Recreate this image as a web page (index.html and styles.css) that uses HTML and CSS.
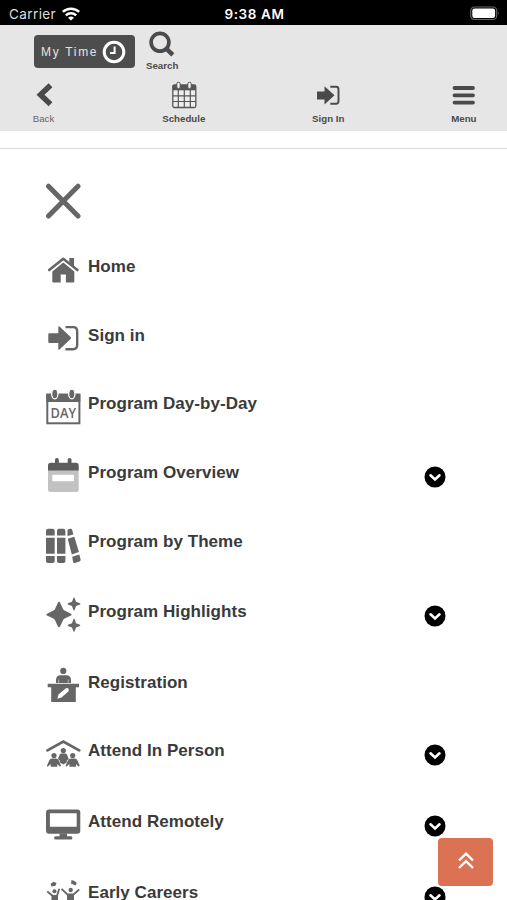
FILE: index.html
```html
<!DOCTYPE html>
<html lang="en">
<head>
    <meta charset="UTF-8">
    <meta name="viewport" content="width=device-width, initial-scale=1.0">
    <title>Menu</title>
    <link rel="stylesheet" href="styles.css">
</head>
<body>
    <div class="statusbar">
        <div class="carrier">
            <span>Carrier</span>
            <svg width="18" height="14" viewBox="0 0 18 14" fill="none" stroke="#fff" stroke-width="2.5">
                <path d="M.8 4.900C5.200.6 12.800.6 17.200 4.900"/>
                <path d="M3.800 8.300C6.800 5.500 11.200 5.500 14.200 8.300"/>
                <path d="M9 13.500L6 10.700Q9 8.500 12 10.700Z" fill="#fff" stroke="none"/>
            </svg>
        </div>
        <div class="time">9:38 AM</div>
        <svg class="battery" width="30" height="15" viewBox="0 0 30 15">
            <rect x="0.700" y="1" width="26" height="12.500" rx="3.800" fill="none" stroke="#666" stroke-width="1.200"/>
            <rect x="2.300" y="2.600" width="22.800" height="9.300" rx="2.200" fill="#fff"/>
            <path d="M28 5.200Q29.800 7.200 28 9.300Z" fill="#666"/>
        </svg>
    </div>

    <header>
        <div class="toprow">
            <button class="mytime">
                <span>My Time</span>
                <svg width="24" height="24" viewBox="0 0 24 24" fill="none" stroke="#fff">
                    <circle cx="12" cy="12" r="9.800" stroke-width="3"/>
                    <path d="M12.600 6.500V13H8" stroke-width="2"/>
                </svg>
            </button>
            <a class="nav search">
                <svg width="26" height="26" viewBox="0 0 26 26" fill="none" stroke="#4a4a4a">
                    <circle cx="11" cy="11.300" r="8.900" stroke-width="3.700"/>
                    <path d="M17 17.300L23.800 23.800" stroke-width="4.500"/>
                </svg>
                <span>Search</span>
            </a>
        </div>
        <nav>
            <a class="nav back">
                <svg width="24" height="28" viewBox="0 0 24 28" fill="none" stroke="#4a4a4a" stroke-width="5.500">
                    <path d="M18.500 4.300L8.500 13.800L18.500 23.300"/>
                </svg>
                <span>Back</span>
            </a>
            <a class="nav">
                <svg width="26" height="28" viewBox="0 0 26 28">
                    <rect x="1.800" y="4" width="23" height="22.500" rx="1.500" fill="#eee" stroke="#555" stroke-width="1.300"/>
                    <path d="M1.800 4H24.800V9.300H1.800Z" fill="#555"/>
                    <path d="M2 14.800H25M2 20.500H25M7.300 9V26M13.300 9V26M19.300 9V26" stroke="#555" stroke-width="1.200"/>
                    <rect x="5.800" y="1.200" width="3.400" height="6.500" rx="1.700" fill="#eee" stroke="#555"/>
                    <rect x="16.800" y="1.200" width="3.400" height="6.500" rx="1.700" fill="#eee" stroke="#555"/>
                </svg>
                <span>Schedule</span>
            </a>
            <a class="nav">
                <svg width="24" height="28" viewBox="0 0 24 28">
                    <path d="M1 10.500H8.500V5.300L18.500 14.300L8.500 23.500V18.500H1Z" fill="#4a4a4a"/>
                    <path d="M14.300 5.700H20Q22.500 5.700 22.500 8.200V20.300Q22.500 22.800 20 22.800H14.300" fill="none" stroke="#4a4a4a" stroke-width="1.900"/>
                </svg>
                <span>Sign In</span>
            </a>
            <a class="nav">
                <svg width="24" height="28" viewBox="0 0 24 28" stroke="#4a4a4a" stroke-width="3.800" stroke-linecap="round">
                    <path d="M2.500 7H21M2.500 14.300H21M2.500 21.600H21"/>
                </svg>
                <span>Menu</span>
            </a>
        </nav>
    </header>
    <div class="divider"></div>

    <main>
        <svg class="close" width="36" height="36" viewBox="0 0 36 36" stroke="#666" stroke-width="5" stroke-linecap="round">
            <path d="M3.500 3.200L33 33M33 3.200L3.500 33"/>
        </svg>

        <ul class="menu">
            <li>
                <svg class="icon" viewBox="0 0 36 36">
                    <path d="M24.300 6H29V15L24.300 11Z"/>
                    <path d="M4.200 18L18.300 6.800L32.400 18" fill="none" stroke="#666" stroke-width="2.600" stroke-linecap="round" stroke-linejoin="round"/>
                    <path d="M18.300 10.500L29.300 19.500V29.500Q29.300 30.500 28.300 30.500H20.900V22.500H15.700V30.500H8.300Q7.300 30.500 7.300 29.500V19.500Z"/>
                </svg>
                <span>Home</span>
            </li>
            <li>
                <svg class="icon" viewBox="0 0 36 36">
                    <path d="M4.300 13.200H13.300V7Q13.300 5.600 14.500 6.500L25.600 17Q26.500 18 25.600 19L14.500 29.500Q13.300 30.400 13.300 29V22.900H4.300Q3.300 22.900 3.300 21.900V14.200Q3.300 13.200 4.300 13.200Z"/>
                    <path d="M20.500 7.100H28Q32.200 7.100 32.200 11.300V25Q32.200 29.200 28 29.200H20.500" fill="none" stroke="#666" stroke-width="2.400"/>
                </svg>
                <span>Sign in</span>
            </li>
            <li>
                <svg class="icon" viewBox="0 0 36 36">
                    <rect x="2.300" y="5.700" width="32.100" height="28.600" fill="#fff" stroke="#666" stroke-width="2"/>
                    <path d="M1.300 4.800H35.300V13H1.300Z"/>
                    <ellipse cx="9.800" cy="5" rx="3.100" ry="4.900" stroke="#fff" stroke-width="1.300"/>
                    <ellipse cx="26.800" cy="5" rx="3.100" ry="4.900" stroke="#fff" stroke-width="1.300"/>
                    <text class="day" x="5.600" y="29" textLength="25.500" lengthAdjust="spacingAndGlyphs">DAY</text>
                </svg>
                <span>Program Day-by-Day</span>
            </li>
            <li class="mid">
                <svg class="icon" viewBox="0 0 36 36">
                    <rect x="3" y="8" width="30.700" height="27" rx="2.500" fill="#c2c2c2"/>
                    <path d="M3 13.500V8.500Q3 5.700 5.800 5.700H10V2.500Q10 1 11.900 1T13.800 2.500V5.700H22.700V2.500Q22.700 1 24.600 1T26.500 2.500V5.700H30.900Q33.700 5.700 33.700 8.500V13.500Z" fill="#5c5c5c"/>
                    <rect x="7.300" y="17.700" width="21.700" height="6.500" rx="0.600" fill="#fff"/>
                </svg>
                <span>Program Overview</span>
                <svg class="arrow" viewBox="0 0 22 22"><circle cx="11" cy="11" r="10.500"/><path d="M6.500 9.300L11 13.400L15.500 9.300"/></svg>
            </li>
            <li class="mid">
                <svg class="icon" viewBox="0 0 36 36">
                    <path d="M1 8.500V4Q1 1.800 3.200 1.800H7.500Q9.700 1.800 9.700 4V8.500ZM1 10.800H9.700V26.800H1ZM1 28.900H9.700V34.200Q9.700 36 7.700 36H3Q1 36 1 34.200Z"/>
                    <path d="M12 8.500V4Q12 1.800 14.200 1.800H18.200Q20.400 1.800 20.400 4V8.500ZM12 10.800H20.400V26.800H12ZM12 28.900H20.400V34.200Q20.400 36 18.400 36H14Q12 36 12 34.200Z"/>
                    <path d="M22.500 9V3.800Q22.500 2.300 24 2L25.600 1.800Q26.800 1.700 27.200 3L28.400 7.400ZM22.700 11.800L29.300 9.800L33.900 25L26.800 27.600ZM27.200 29.800L34.300 27.400L35.600 32.500Q36 34 34.500 34.500L29.800 35.900Q28.500 36.300 28.100 34.900Z"/>
                </svg>
                <span>Program by Theme</span>
            </li>
            <li class="tall">
                <svg class="icon" viewBox="0 0 36 36">
                    <path d="M14 4.800Q14.800 4.800 15.200 6L18 12Q18.500 13.100 19.600 13.600L25.500 16.400Q26.600 16.900 26.600 17.600T25.500 18.800L19.600 21.600Q18.500 22.100 18 23.200L15.200 29.200Q14.800 30.300 14 30.300T12.800 29.200L10 23.200Q9.500 22.100 8.400 21.600L2.500 18.800Q1.400 18.300 1.400 17.600T2.500 16.400L8.400 13.600Q9.500 13.100 10 12L12.800 6Q13.200 4.800 14 4.800Z"/>
                    <path id="spark" d="M29 .4Q29.500.4 29.800 1.400L31 4.800L34.400 6Q35.400 6.400 35.400 6.900T34.400 7.800L31 9L29.800 12.400Q29.500 13.400 29 13.400T28.200 12.400L27 9L23.600 7.800Q22.600 7.400 22.600 6.900T23.600 6L27 4.800L28.200 1.400Q28.500.4 29 .4Z"/>
                    <use href="#spark" y="21.400"/>
                </svg>
                <span>Program Highlights</span>
                <svg class="arrow" viewBox="0 0 22 22"><circle cx="11" cy="11" r="10.500"/><path d="M6.500 9.300L11 13.400L15.500 9.300"/></svg>
            </li>
            <li>
                <svg class="icon" viewBox="0 0 36 36">
                    <circle cx="18.300" cy="3.900" r="3.100"/>
                    <path d="M11 16V13Q11 8.200 15.500 8.200H21.200Q26 8.200 26 13V16H23.400V12.500H22.900V16H14.100V12.500H13.600V16Z"/>
                    <path d="M2.700 16.800H34V20.300H30.800V35H6.200V20.300H2.700Z"/>
                    <path d="M12.300 31.800L13.500 27.600L20.500 21.400Q24.200 20 23.600 24.300L16.500 30.400Z" fill="#fff"/>
                </svg>
                <span>Registration</span>
            </li>
            <li class="tall">
                <svg class="icon" viewBox="0 0 36 36">
                    <path d="M2.500 14.400L18.300 5.500L34.200 14.400" fill="none" stroke="#666" stroke-width="2.800" stroke-linecap="round"/>
                    <circle cx="18.300" cy="14.600" r="2.600"/>
                    <path d="M12.900 23L14.700 18.600Q15.200 17.600 16.400 17.600H20.200Q21.400 17.600 21.900 18.600L23.700 23L21.800 24.600V26.500L18.300 28.500L14.800 26.500V24.600Z"/>
                    <circle cx="9" cy="19.500" r="2.600"/>
                    <circle cx="27.700" cy="19.500" r="2.600"/>
                    <path id="guest" d="M2.600 30.800L1.900 29.800L4.200 24.500Q5 22.500 7 22.500H11Q13 22.500 13.800 24.500L16 29.600L15 30.800L12.300 28V30.800H5.700V28Z"/>
                    <use href="#guest" x="18.700"/>
                </svg>
                <span>Attend In Person</span>
                <svg class="arrow" viewBox="0 0 22 22"><circle cx="11" cy="11" r="10.500"/><path d="M6.500 9.300L11 13.400L15.500 9.300"/></svg>
            </li>
            <li class="tall">
                <svg class="icon" viewBox="0 0 36 36">
                    <rect x="1" y="2.500" width="34.300" height="24.300" rx="3"/>
                    <rect x="4.900" y="6.200" width="26.800" height="13.500" rx="0.500" fill="#fff"/>
                    <path d="M14.600 26.500H22V29.300H26Q27.400 29.300 27.400 31T26 32.600H10.500Q9.100 32.600 9.100 31T10.500 29.300H14.600Z"/>
                </svg>
                <span>Attend Remotely</span>
                <svg class="arrow" viewBox="0 0 22 22"><circle cx="11" cy="11" r="10.500"/><path d="M6.500 9.300L11 13.400L15.500 9.300"/></svg>
            </li>
            <li class="tall">
                <svg class="icon" viewBox="0 0 36 36">
                    <path d="M5.500 7L8.500 4.800L11.500 6L10.500 8.800L6.500 9.500ZM26.500 3L29.500 4L31.800 6L30.500 8.500L26 6.500Z"/>
                    <circle cx="9.500" cy="14.200" r="2"/>
                    <circle cx="25.700" cy="13" r="2.200"/>
                    <path d="M2.300 14.500L7.500 18.800H12L14.300 11.800M16.500 11.800L22.500 17.500H28.500L34.200 12.500" fill="none" stroke="#666" stroke-width="1.800"/>
                    <path d="M6.500 18H13V36H6.500ZM22 17H29V36H22Z"/>
                </svg>
                <span>Early Careers</span>
                <svg class="arrow" viewBox="0 0 22 22"><circle cx="11" cy="11" r="10.500"/><path d="M6.500 9.300L11 13.400L15.500 9.300"/></svg>
            </li>
        </ul>
    </main>

    <button class="totop">
        <svg width="20" height="20" viewBox="0 0 20 20" fill="none" stroke="#fff" stroke-width="2.400">
            <path d="M3 9.500L10 2.700L17 9.500M3 17L10 10.200L17 17"/>
        </svg>
    </button>
</body>
</html>
```
FILE: styles.css
```css
*{
    box-sizing: border-box;
}
body{
    margin: 0;
    height: 900px;
    overflow: hidden;
    background-color: #fff;
    font-family: "Liberation Sans", Arial, sans-serif;
    color: #3a3a3a;
}
svg{
    display: block;
    flex-shrink: 0;
}
button{
    border: none;
    padding: 0;
    cursor: pointer;
}

/* status bar */
.statusbar{
    display: grid;
    grid-template-columns: 1fr auto 1fr;
    align-items: center;
    height: 25px;
    padding: 2px 7px 0 9px;
    background-color: #000;
    color: #fff;
    font-family: Inter, sans-serif;
    font-size: 13.5px;
}
.carrier{
    display: flex;
    align-items: center;
    gap: 6px;
    color: #ddd;
    letter-spacing: 0.4px;
}
.time{
    font-weight: 600;
    letter-spacing: 0.6px;
}
.battery{
    justify-self: end;
}

/* header */
header{
    height: 106px;
    background-color: #e6e6e6;
}
.toprow{
    display: flex;
    gap: 11px;
    height: 54px;
    padding: 6px 0 0 34px;
}
.mytime{
    display: flex;
    align-items: center;
    justify-content: space-between;
    width: 101px;
    height: 33px;
    margin-top: 4px;
    padding: 0 9px 0 7px;
    border-radius: 4px;
    background-color: #4d4d4d;
    color: #e4e4e4;
    font-family: "Liberation Sans", Arial, sans-serif;
    font-size: 12px;
    letter-spacing: 1.7px;
    white-space: nowrap;
}
.nav{
    display: flex;
    flex-direction: column;
    align-items: center;
    font-size: 9.7px;
    font-weight: bold;
    line-height: 12px;
    color: #4a4a4a;
}
.search span{
    margin-top: 3px;
}
nav{
    display: flex;
    justify-content: space-between;
    padding: 2px 30.5px 0 31.5px;
}
nav span{
    margin-top: 4px;
}
.back{
    font-weight: normal;
    color: #666;
}
.divider{
    height: 18px;
    border-bottom: 1px solid #ddd;
}

/* menu list */
main{
    padding: 34px 61px 0 45px;
}
.menu{
    list-style: none;
    margin: 0;
    padding: 0;
    padding-top: 29px;
}
.menu li{
    display: flex;
    align-items: flex-start;
    height: 68.5px;
    font-size: 17px;
    font-weight: bold;
    line-height: 38px;
}
.menu li.mid{
    height: 69.75px;
}
.menu li.tall{
    height: 70.75px;
}
.menu span{
    flex: 1;
    margin-left: 7px;
    letter-spacing: 0.05px;
}
.icon{
    width: 36px;
    height: 36px;
    margin-top: 3.5px;
    fill: #666;
}
.day{
    font-family: "Open Sans", sans-serif;
    font-size: 14.8px;
    font-weight: 600;
}
.arrow{
    width: 22px;
    height: 22px;
    margin-top: 12px;
}
.arrow path{
    fill: none;
    stroke: #fff;
    stroke-width: 2.6;
    stroke-linecap: round;
}

.totop{
    position: fixed;
    right: 14px;
    bottom: 14px;
    display: flex;
    align-items: center;
    justify-content: center;
    width: 55px;
    height: 48px;
    padding-bottom: 3px;
    border-radius: 4px;
    background-color: #dc7254;
}
```
